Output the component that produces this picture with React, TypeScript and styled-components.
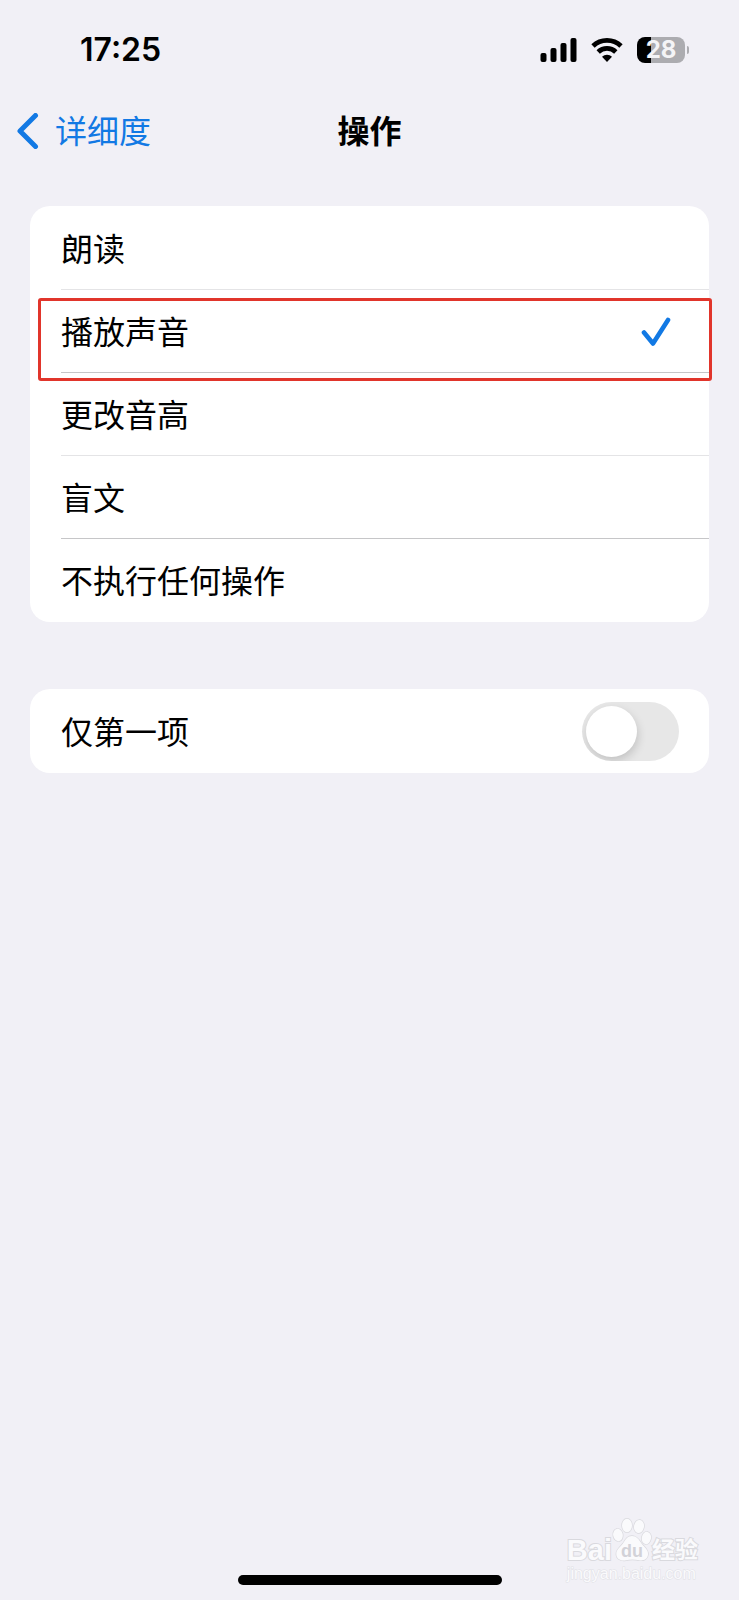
import React, { useState } from 'react';
import styled, { createGlobalStyle } from 'styled-components';

const GlobalStyle = createGlobalStyle`
  * { box-sizing: border-box; }
  body {
    margin: 0;
    background: #f1f0f6;
    color: #000;
    font-family: Inter, "Noto Sans CJK SC", sans-serif;
  }
`;

const Screen = styled.div`
  position: relative;
  display: flex;
  flex-direction: column;
  min-height: 100vh;
`;

const StatusBar = styled.header`
  display: flex;
  align-items: center;
  justify-content: space-between;
  height: 98px;
  padding: 2px 50px 0 80px;
`;

const Clock = styled.time`
  font-size: 32px;
  line-height: 40px;
  font-weight: 600;
`;

const StatusIcons = styled.div`
  display: flex;
  align-items: center;
  gap: 14px;
`;

const Battery = styled.div`
  display: flex;
  align-items: center;
  gap: 2px;
`;

const BatteryBody = styled.div<{ $level: number }>`
  width: 48px;
  height: 26px;
  border-radius: 8px;
  background: linear-gradient(to right, #000 ${p => p.$level}%, #acacb0 ${p => p.$level}%);
  color: #f4f4f6;
  font-size: 24px;
  line-height: 26px;
  font-weight: 700;
  text-align: center;
`;

const BatteryTip = styled.span`
  width: 2px;
  height: 8px;
  border-radius: 0 2px 2px 0;
  background: #acacb0;
`;

const NavBar = styled.nav`
  display: grid;
  grid-template-columns: 1fr auto 1fr;
  align-items: center;
  height: 66px;
  padding: 0 16px;
`;

const BackLink = styled.a`
  display: flex;
  align-items: center;
  gap: 15px;
  color: #1279e4;
  font-size: 32px;
  line-height: 48px;
  text-decoration: none;
`;

const BackText = styled.span`
  padding-top: 2px;
`;

const Title = styled.h1`
  margin: 0;
  padding-top: 2px;
  font-size: 32px;
  line-height: 48px;
  font-weight: 700;
`;

const Main = styled.main`
  display: flex;
  flex-direction: column;
  gap: 67px;
  padding: 42px 30px 0;
`;

const Card = styled.section`
  padding-top: 1px;
  border-radius: 20px;
  background: #fff;
`;

const Row = styled.label`
  position: relative;
  display: flex;
  height: 83px;
  padding-left: 31px;
  font-size: 32px;
  line-height: 48px;
`;

const RowContent = styled.span<{ $divider?: string }>`
  display: flex;
  flex: 1;
  align-items: center;
  justify-content: space-between;
  padding-right: 30px;
  border-bottom: 1px solid ${p => p.$divider ?? 'transparent'};
`;

const RowText = styled.span`
  padding-top: 4px;
`;

const HiddenRadio = styled.input`
  position: absolute;
  opacity: 0;
  margin: 0;
`;

const Highlight = styled.span`
  position: absolute;
  inset: 8px -3px -8px 8px;
  border: 3px solid #e1352b;
  border-radius: 3px;
  pointer-events: none;
`;

const Check = styled.svg`
  margin-right: 8px;
`;

const Switch = styled.input`
  appearance: none;
  width: 97px;
  height: 59px;
  margin: 0;
  padding: 4px;
  border-radius: 30px;
  background: #e7e7e7;
  overflow: hidden;

  &::before {
    content: '';
    display: block;
    width: 51px;
    height: 51px;
    border-radius: 50%;
    background: #fff;
    box-shadow: 1px 4px 10px rgba(0, 0, 0, 0.16);
  }

  &:checked { background: #34c759; }
  &:checked::before { margin-left: auto; }
`;

const HomeIndicator = styled.div`
  width: 264px;
  height: 10px;
  margin: auto auto 15px;
  border-radius: 5px;
  background: #000;
`;

const Watermark = styled.aside`
  position: absolute;
  right: 41px;
  bottom: 16px;
  color: #fafafc;
  font-family: "Liberation Sans", "Noto Sans CJK SC", sans-serif;
  paint-order: stroke fill;
  -webkit-text-stroke: 2px #d9d9de;
`;

const Brand = styled.div`
  display: flex;
  align-items: flex-end;
  font-size: 29px;
  line-height: 28px;
  font-weight: 700;
`;

const BrandSuffix = styled.span`
  font-size: 23px;
`;

const Url = styled.div`
  font-size: 16px;
  line-height: 20px;
  -webkit-text-stroke: 1px #e0e0e5;
`;

const options = [
  { label: '朗读', divider: '#e4e4e6' },
  { label: '播放声音', divider: '#c6c6c8', highlighted: true },
  { label: '更改音高', divider: '#e4e4e6' },
  { label: '盲文', divider: '#c6c6c8' },
  { label: '不执行任何操作' },
];

function SignalIcon() {
  return (
    <svg width="38" height="26" viewBox="0 0 38 26" aria-label="信号">
      <rect x="1.500" y="16" width="6" height="9" rx="2" />
      <rect x="11.500" y="11" width="6" height="14" rx="2" />
      <rect x="21.500" y="6" width="6" height="19" rx="2" />
      <rect x="31.500" y="1" width="6" height="24" rx="2" />
    </svg>
  );
}

function WifiIcon() {
  return (
    <svg width="32" height="26" viewBox="0 0 32 26" aria-label="无线网络">
      <g fill="none" stroke="#000" strokeWidth="4.800">
        <path d="M2 9A20.200 20.200 0 0 1 30 9" />
        <path d="M7.200 15A12.700 12.700 0 0 1 24.800 15" />
      </g>
      <path d="M16 25l-5-5.200a7.200 7.200 0 0 1 10 0z" />
    </svg>
  );
}

function Paw() {
  return (
    <svg width="40" height="46" viewBox="0 0 40 46" aria-hidden="true">
      <g fill="#fafafc" stroke="#d9d9de" strokeWidth="1.400">
        <ellipse cx="6" cy="17" rx="4.800" ry="6.200" transform="rotate(-12 6 17)" />
        <ellipse cx="15" cy="7.500" rx="5" ry="6.800" />
        <ellipse cx="27" cy="8.500" rx="5" ry="6.600" transform="rotate(10 27 8.500)" />
        <ellipse cx="34.400" cy="20" rx="4.600" ry="6.200" transform="rotate(10 34.400 20)" />
        <path d="M20 18c4.500 0 7 3.500 9.500 7.500 3 4 7 6 6.500 11-.5 5-5 6.500-9 5.700-4-.8-9-.8-13 0-5 1-9.500-1-9.700-6-.2-4.600 4-7 6.700-10.700C13.500 21.500 15.500 18 20 18z" />
      </g>
      <text x="20" y="39" textAnchor="middle" fontSize="18" fontWeight="700" fill="#d2d2d8" stroke="none" style={{ WebkitTextStroke: 0 }} fontFamily="Liberation Sans, sans-serif">du</text>
    </svg>
  );
}

export default function App() {
  const [action, setAction] = useState('播放声音');

  return (
    <Screen>
      <GlobalStyle />
      <StatusBar>
        <Clock>17:25</Clock>
        <StatusIcons>
          <SignalIcon />
          <WifiIcon />
          <Battery>
            <BatteryBody $level={29}>28</BatteryBody>
            <BatteryTip />
          </Battery>
        </StatusIcons>
      </StatusBar>
      <NavBar>
        <BackLink href="#verbosity">
          <svg width="24" height="36" viewBox="0 0 24 36" fill="none" stroke="currentColor" strokeWidth="5" strokeLinecap="round" strokeLinejoin="round" aria-hidden="true">
            <path d="M19.500 2.500L4 18l15.500 15.500" />
          </svg>
          <BackText>详细度</BackText>
        </BackLink>
        <Title>操作</Title>
      </NavBar>
      <Main>
        <Card role="radiogroup" aria-label="操作">
          {options.map(o => (
            <Row key={o.label}>
              <HiddenRadio type="radio" name="action" checked={action === o.label} onChange={() => setAction(o.label)} />
              <RowContent $divider={o.divider}>
                <RowText>{o.label}</RowText>
                {action === o.label && (
                  <Check width="30" height="30" viewBox="0 0 30 30" fill="none" stroke="#1279e4" strokeWidth="4.600" strokeLinecap="round" strokeLinejoin="round" aria-hidden="true">
                    <path d="M3 16.500l9 11L27 4" />
                  </Check>
                )}
              </RowContent>
              {o.highlighted && <Highlight />}
            </Row>
          ))}
        </Card>
        <Card>
          <Row>
            <RowContent>
              <RowText>仅第一项</RowText>
              <Switch type="checkbox" role="switch" />
            </RowContent>
          </Row>
        </Card>
      </Main>
      <HomeIndicator />
      <Watermark>
        <Brand>
          <span>Bai</span>
          <Paw />
          <BrandSuffix>经验</BrandSuffix>
        </Brand>
        <Url>jingyan.baidu.com</Url>
      </Watermark>
    </Screen>
  );
}
